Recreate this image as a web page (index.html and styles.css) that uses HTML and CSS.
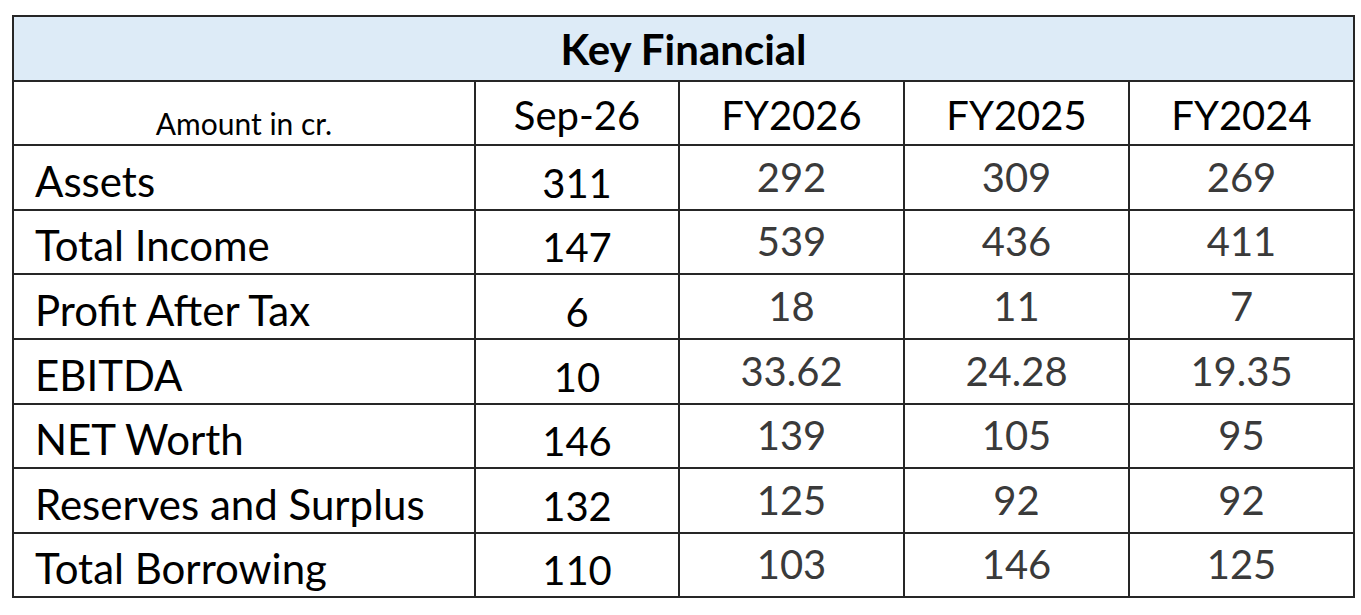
FILE: index.html
```html
<!DOCTYPE html>
<html>
<head>
<meta charset="utf-8">
<link rel="stylesheet" href="styles.css">
</head>
<body>
<table class="fin">
  <colgroup>
    <col class="c-label">
    <col class="c-sep">
    <col class="c-fy">
    <col class="c-fy">
    <col class="c-fy">
  </colgroup>
  <tr class="title-row"><th colspan="5">Key Financial</th></tr>
  <tr class="head-row">
    <th class="amt">Amount in cr.</th>
    <th class="hd">Sep-26</th>
    <th class="hd">FY2026</th>
    <th class="hd">FY2025</th>
    <th class="hd">FY2024</th>
  </tr>
  <tr><td class="lbl">Assets</td><td class="cur">311</td><td class="val">292</td><td class="val">309</td><td class="val">269</td></tr>
  <tr><td class="lbl">Total Income</td><td class="cur">147</td><td class="val">539</td><td class="val">436</td><td class="val">411</td></tr>
  <tr><td class="lbl">Profit After Tax</td><td class="cur">6</td><td class="val">18</td><td class="val">11</td><td class="val">7</td></tr>
  <tr><td class="lbl">EBITDA</td><td class="cur">10</td><td class="val">33.62</td><td class="val">24.28</td><td class="val">19.35</td></tr>
  <tr><td class="lbl">NET Worth</td><td class="cur">146</td><td class="val">139</td><td class="val">105</td><td class="val">95</td></tr>
  <tr><td class="lbl">Reserves and Surplus</td><td class="cur">132</td><td class="val">125</td><td class="val">92</td><td class="val">92</td></tr>
  <tr><td class="lbl">Total Borrowing</td><td class="cur">110</td><td class="val">103</td><td class="val">146</td><td class="val">125</td></tr>
</table>
</body>
</html>
```

FILE: styles.css
```css
html, body {
  margin: 0;
  padding: 0;
  background: #ffffff;
}

body {
  padding: 15px 0 0 12px;
  font-family: Lato, "Open Sans", sans-serif;
}

.fin {
  border-collapse: collapse;
  table-layout: fixed;
  width: 1342px;
  color: #000000;
}

.c-label { width: 462px; }
.c-sep { width: 204px; }
.c-fy { width: 225px; }

.fin tr {
  height: 64.6px;
}

.fin th,
.fin td {
  box-sizing: border-box;
  border: 2px solid #262626;
  padding: 0;
  height: 64.6px;
  line-height: 1;
  font-weight: 400;
  white-space: nowrap;
}

.title-row th {
  background: #ddebf7;
  font-weight: 700;
  font-size: 42px;
  text-align: center;
  vertical-align: bottom;
  padding-bottom: 10px;
}

.head-row th {
  vertical-align: bottom;
  text-align: center;
  font-size: 40px;
  padding-bottom: 9px;
}

.head-row th.amt {
  font-size: 30px;
  padding-bottom: 6px;
}

.fin td {
  font-size: 40px;
  text-align: center;
  vertical-align: bottom;
}

.fin td.lbl {
  font-size: 42px;
  text-align: left;
  padding-left: 21px;
  padding-bottom: 7px;
}

.fin td.cur {
  padding-bottom: 6px;
}

.fin td.val {
  color: #3a3a3a;
  padding-bottom: 12px;
}
```
